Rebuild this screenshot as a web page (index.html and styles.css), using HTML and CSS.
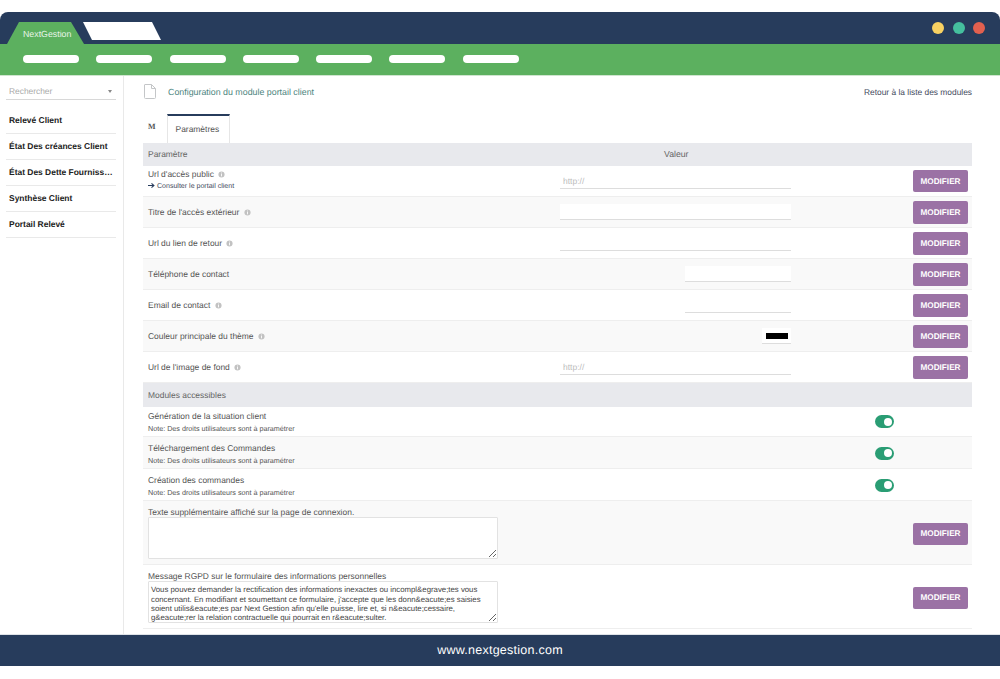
FILE: index.html
```html
<!DOCTYPE html>
<html lang="fr">
<head>
<meta charset="utf-8">
<title>NextGestion</title>
<link rel="stylesheet" href="styles.css">
</head>
<body>
<div class="app">
  <header class="topbar">
    <div class="tab-green">NextGestion</div>
    <div class="tab-white"></div>
    <div class="dots"><span class="dot yellow"></span><span class="dot teal"></span><span class="dot red"></span></div>
  </header>
  <nav class="nav">
    <span class="pill"></span><span class="pill"></span><span class="pill"></span><span class="pill"></span><span class="pill"></span><span class="pill"></span><span class="pill"></span>
  </nav>
  <div class="main">
    <aside class="side">
      <div class="search"><span>Rechercher</span><i class="caret"></i></div>
      <a class="item">Relevé Client</a>
      <a class="item">État Des créances Client</a>
      <a class="item">État Des Dette Fournisseurs</a>
      <a class="item">Synthèse Client</a>
      <a class="item">Portail Relevé</a>
    </aside>
    <section class="content">
      <div class="title">
        <svg class="file" width="12" height="15" viewBox="0 0 12 15"><path d="M1 .5h6.500L11.500 4.500v9a1 1 0 0 1-1 1h-9a1 1 0 0 1-1-1v-12.500a.5.5 0 0 1 .5-.5z M7.500 .5v4h4" fill="none" stroke="#c4c6c8"/></svg>
        <span class="title-text">Configuration du module portail client</span>
        <span class="back">Retour à la liste des modules</span>
      </div>
      <div class="tabs"><span class="tab-m">M</span><span class="tab-active">Paramètres</span></div>

      <div class="head"><span class="head-l">Paramètre</span><span class="head-v">Valeur</span></div>

      <div class="row first">
        <div class="label"><div>Url d'accès public <svg class="info" viewBox="0 0 8 8"><circle cx="4" cy="4" r="3.500" fill="#c2c2c2"/><rect x="3.500" y="3.300" width="1" height="2.800" fill="#fff"/><rect x="3.500" y="1.800" width="1" height="1" fill="#fff"/></svg></div><div class="sub"><svg class="arrow" viewBox="0 0 8 8"><path d="M0 4h6.500M4 1.500 6.800 4 4 6.500" fill="none" stroke="#273c5c" stroke-width="1.200"/></svg> Consulter le portail client</div></div>
        <div class="val"><input class="inp wide" placeholder="http://"></div>
        <button class="btn">MODIFIER</button>
      </div>
      <div class="row h31">
        <div class="label">Titre de l'accès extérieur <svg class="info" viewBox="0 0 8 8"><circle cx="4" cy="4" r="3.500" fill="#c2c2c2"/><rect x="3.500" y="3.300" width="1" height="2.800" fill="#fff"/><rect x="3.500" y="1.800" width="1" height="1" fill="#fff"/></svg></div>
        <div class="val"><input class="inp wide"></div>
        <button class="btn">MODIFIER</button>
      </div>
      <div class="row h31">
        <div class="label">Url du lien de retour <svg class="info" viewBox="0 0 8 8"><circle cx="4" cy="4" r="3.500" fill="#c2c2c2"/><rect x="3.500" y="3.300" width="1" height="2.800" fill="#fff"/><rect x="3.500" y="1.800" width="1" height="1" fill="#fff"/></svg></div>
        <div class="val"><input class="inp wide"></div>
        <button class="btn">MODIFIER</button>
      </div>
      <div class="row h31">
        <div class="label">Téléphone de contact</div>
        <div class="val"><input class="inp mid"></div>
        <button class="btn">MODIFIER</button>
      </div>
      <div class="row h31">
        <div class="label">Email de contact <svg class="info" viewBox="0 0 8 8"><circle cx="4" cy="4" r="3.500" fill="#c2c2c2"/><rect x="3.500" y="3.300" width="1" height="2.800" fill="#fff"/><rect x="3.500" y="1.800" width="1" height="1" fill="#fff"/></svg></div>
        <div class="val"><input class="inp mid"></div>
        <button class="btn">MODIFIER</button>
      </div>
      <div class="row h31">
        <div class="label">Couleur principale du thème <svg class="info" viewBox="0 0 8 8"><circle cx="4" cy="4" r="3.500" fill="#c2c2c2"/><rect x="3.500" y="3.300" width="1" height="2.800" fill="#fff"/><rect x="3.500" y="1.800" width="1" height="1" fill="#fff"/></svg></div>
        <div class="val"><span class="color"><span class="swatch"></span></span></div>
        <button class="btn">MODIFIER</button>
      </div>
      <div class="row h31">
        <div class="label">Url de l'image de fond <svg class="info" viewBox="0 0 8 8"><circle cx="4" cy="4" r="3.500" fill="#c2c2c2"/><rect x="3.500" y="3.300" width="1" height="2.800" fill="#fff"/><rect x="3.500" y="1.800" width="1" height="1" fill="#fff"/></svg></div>
        <div class="val"><input class="inp wide" placeholder="http://"></div>
        <button class="btn">MODIFIER</button>
      </div>

      <div class="head section"><span class="head-l">Modules accessibles</span></div>

      <div class="row mod-first">
        <div class="label mod"><div>Génération de la situation client</div><div class="note">Note: Des droits utilisateurs sont à paramétrer</div></div>
        <span class="toggle"></span>
      </div>
      <div class="row h32">
        <div class="label mod"><div>Téléchargement des Commandes</div><div class="note">Note: Des droits utilisateurs sont à paramétrer</div></div>
        <span class="toggle"></span>
      </div>
      <div class="row h32">
        <div class="label mod"><div>Création des commandes</div><div class="note">Note: Des droits utilisateurs sont à paramétrer</div></div>
        <span class="toggle"></span>
      </div>

      <div class="row h64">
        <div class="area-wrap">
          <div class="area-label">Texte supplémentaire affiché sur la page de connexion.</div>
          <textarea class="area"></textarea>
        </div>
        <button class="btn">MODIFIER</button>
      </div>
      <div class="row h64">
        <div class="area-wrap">
          <div class="area-label">Message RGPD sur le formulaire des informations personnelles</div>
          <textarea class="area">Vous pouvez demander la rectification des informations inexactes ou incompl&amp;egrave;tes vous concernant. En modifiant et soumettant ce formulaire, j'accepte que les donn&amp;eacute;es saisies soient utilis&amp;eacute;es par Next Gestion afin qu'elle puisse, lire et, si n&amp;eacute;cessaire, g&amp;eacute;rer la relation contractuelle qui pourrait en r&amp;eacute;sulter.</textarea>
        </div>
        <button class="btn">MODIFIER</button>
      </div>
    </section>
  </div>
  <footer class="footer">www.nextgestion.com</footer>
</div>
</body>
</html>
```
FILE: styles.css
```css
* { box-sizing: border-box; }
html, body { margin: 0; padding: 0; background: #fff; }
body { font-family: "Liberation Sans", Arial, sans-serif; font-size: 8.450px; color: #555; text-rendering: geometricPrecision; }
input, textarea, button { text-rendering: geometricPrecision; }
.app { width: 1000px; height: 679px; padding-top: 12px; overflow: hidden; }

.topbar { height: 32px; background: #273c5c; border-radius: 8px 8px 0 0; display: flex; align-items: flex-end; position: relative; padding-left: 7px; }
.tab-green { width: 77px; height: 22px; background: #5cb05f; color: #e8f4e8; font-size: 8.800px; line-height: 24px; padding-left: 16px; clip-path: polygon(0 100%, 12px 0, 64px 0, 77px 100%); }
.tab-white { width: 78px; height: 18px; margin: 0 0 4px -1px; background: #fff; clip-path: polygon(0 0, 69px 0, 78px 100%, 9px 100%); }
.dots { margin-left: auto; align-self: center; display: flex; gap: 8.500px; padding-right: 15px; }
.dot { width: 12px; height: 12px; border-radius: 50%; }
.yellow { background: #f8d162; }
.teal { background: #45bf9e; }
.red { background: #e2604f; }

.nav { height: 32px; background: #5cb05f; border-bottom: 1px solid #cfe5cf; display: flex; align-items: center; gap: 17.300px; padding: 0 0 1px 23px; }
.pill { width: 56px; height: 8px; border-radius: 4px; background: #fff; }

.main { height: 558px; display: flex; overflow: hidden; }
.side { width: 124px; flex: none; border-right: 1px solid #e9e9e9; padding: 7px 7px 0 6px; }
.search { height: 17px; border-bottom: 1px solid #d8d8d8; display: flex; justify-content: space-between; align-items: center; padding: 0 3px; color: #aaa; font-size: 8.400px; margin-bottom: 8px; }
.caret { width: 0; height: 0; border-left: 2.500px solid transparent; border-right: 2.500px solid transparent; border-top: 3px solid #888; margin-right: 1px; }
.item { display: block; height: 26px; line-height: 25px; border-bottom: 1px solid #e9e9e9; font-weight: 700; font-size: 8.450px; color: #222; padding-left: 3px; white-space: nowrap; overflow: hidden; text-overflow: ellipsis; }

.content { flex: 1; padding: 0 28px 0 19px; min-width: 0; }
.title { height: 31px; display: flex; align-items: center; }
.file { margin: 0 12px 0 1px; }
.title-text { color: #4d8580; font-size: 8.850px; }
.back { margin-left: auto; color: #444b5e; font-size: 8.400px; }
.tabs { height: 35.500px; padding-top: 7px; display: flex; }
.tab-m { font-family: "Liberation Serif", serif; font-size: 8px; font-weight: 700; color: #555; width: 24px; padding: 8px 0 0 5px; }
.tab-active { width: 63px; border-top: 2px solid #273c5c; border-left: 1px solid #e6e6e6; border-right: 1px solid #e6e6e6; padding: 8px 0 0 7.500px; color: #555; }

.head { height: 23.500px; background: #e8e9ed; display: flex; align-items: center; padding-left: 5px; color: #666; }
.head-l { width: 516px; }
.head-v { font-size: 8.700px; }
.section { height: 23.400px; }

.row { display: flex; align-items: center; border-bottom: 1px solid #eee; padding: 0 4px 0 5px; }
.row:nth-child(even) { background: #fff; }
.row:nth-child(odd) { background: #f9f9f9; }
.first { height: 31.300px; }
.mod-first { height: 30.600px; }
.h32 { height: 32px; }
.h31 { height: 31px; }
.h64 { height: 64px; }
.h64 .btn { margin-top: 2px; }
.label { width: 412px; flex: none; line-height: 11px; color: #555; }
.mod { padding-top: 3px; }
.h32 .mod { padding-top: 5px; }
.sub { font-size: 7.050px; color: #444b5e; line-height: 13px; }
.arrow { width: 7px; height: 7px; vertical-align: -1px; }
.note { font-size: 7.200px; color: #555; line-height: 13px; }
.info { width: 7px; height: 7px; margin-left: 2px; vertical-align: -1px; }
.val { width: 231px; flex: none; display: flex; justify-content: flex-end; }
.inp { height: 16px; border: 0; border-bottom: 1px solid #ddd; background: #fff; padding: 0 3px; font-family: inherit; font-size: 8.500px; outline: 0; display: block; }
.inp::placeholder { color: #bbb; }
.wide { width: 231px; }
.mid { width: 106px; }
.color { width: 29px; height: 16px; background: #fff; border-bottom: 1px solid #ddd; display: flex; align-items: center; justify-content: center; }
.swatch { width: 22px; height: 6px; background: #000; }
.btn { margin-left: auto; width: 55px; height: 22.500px; border: 0; border-radius: 2px; background: #9b72a5; color: #fff; font-family: inherit; font-weight: 700; font-size: 8.200px; padding: 0; }
.toggle { margin-left: auto; margin-top: 1px; margin-right: 74px; width: 19px; height: 13px; border-radius: 7px; background: #2a9d74; position: relative; }
.toggle::after { content: ""; position: absolute; right: 2px; top: 2.500px; width: 8px; height: 8px; border-radius: 50%; background: #fff; }
.area-wrap { width: 350px; align-self: flex-start; padding-top: 6px; }
.area-label { line-height: 10px; color: #555; }
.area { display: block; width: 350px; height: 42px; border: 1px solid #e2e2e2; border-radius: 1px; background: #fff; padding: 3px 2px 0; font-family: inherit; font-size: 7.800px; line-height: 9.300px; color: #444; outline: 0; overflow: hidden; }

.footer { height: 32px; background: #273c5c; border-top: 1px solid #dfe3e8; color: #fff; text-align: center; line-height: 31px; font-size: 12.500px; letter-spacing: .25px; }
```
